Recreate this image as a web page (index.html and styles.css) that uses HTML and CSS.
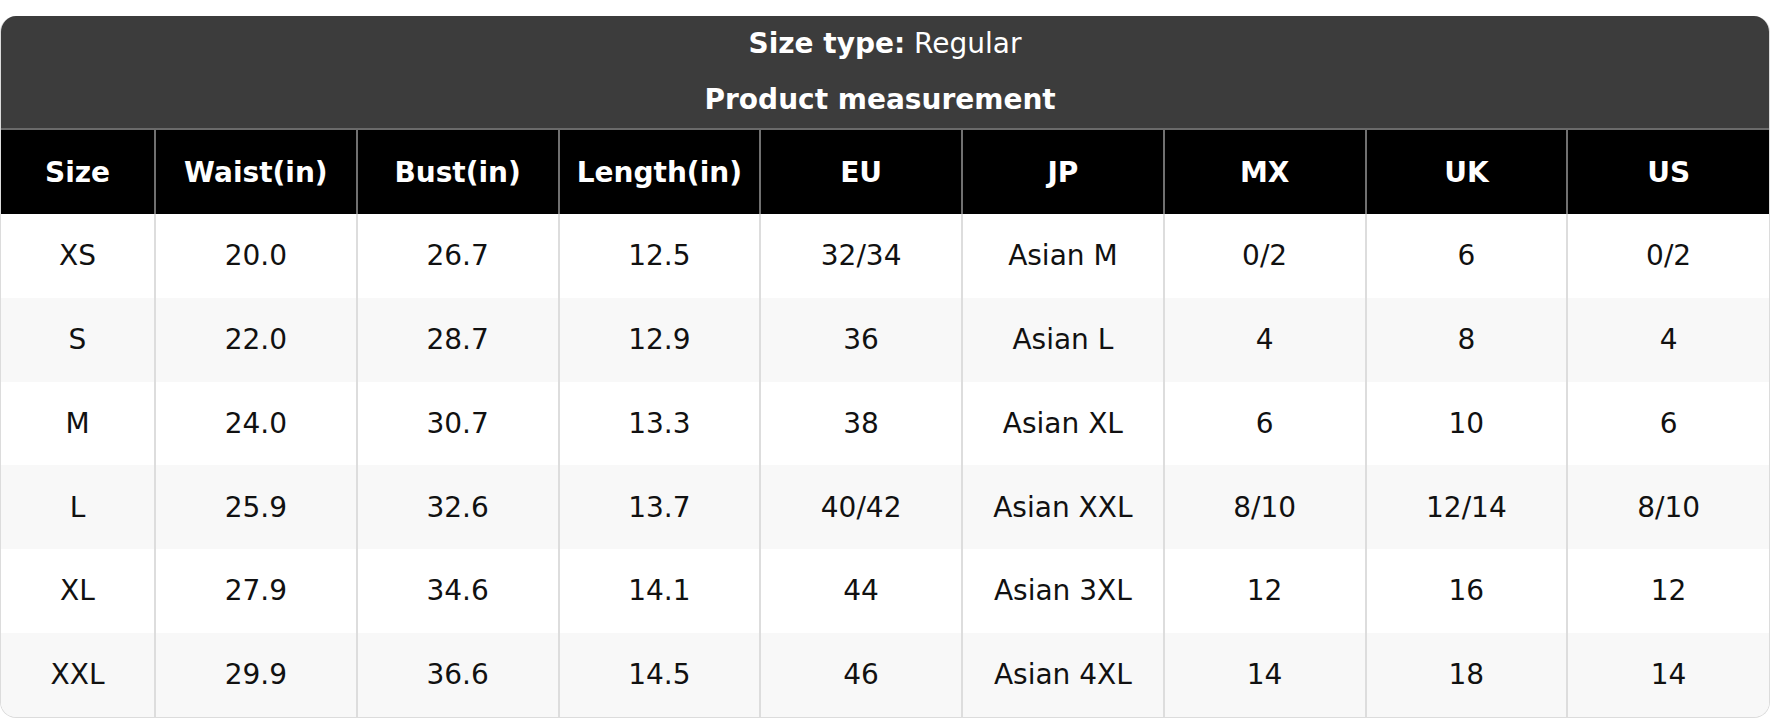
FILE: index.html
```html
<!DOCTYPE html>
<html>
<head>
<meta charset="utf-8">
<link rel="stylesheet" href="styles.css">
</head>
<body>
<div class="page">
  <div class="card">
    <div class="title">
      <div class="title-line"><b>Size type:</b> Regular</div>
      <div class="title-line"><b>Product measurement&nbsp;</b></div>
    </div>
    <table class="chart">
      <colgroup>
        <col class="col-size">
        <col><col><col><col><col><col><col><col>
      </colgroup>
      <thead>
        <tr><th>Size</th><th>Waist(in)</th><th>Bust(in)</th><th>Length(in)</th><th>EU</th><th>JP</th><th>MX</th><th>UK</th><th>US</th></tr>
      </thead>
      <tbody>
        <tr><td>XS</td><td>20.0</td><td>26.7</td><td>12.5</td><td>32/34</td><td>Asian M</td><td>0/2</td><td>6</td><td>0/2</td></tr>
        <tr><td>S</td><td>22.0</td><td>28.7</td><td>12.9</td><td>36</td><td>Asian L</td><td>4</td><td>8</td><td>4</td></tr>
        <tr><td>M</td><td>24.0</td><td>30.7</td><td>13.3</td><td>38</td><td>Asian XL</td><td>6</td><td>10</td><td>6</td></tr>
        <tr><td>L</td><td>25.9</td><td>32.6</td><td>13.7</td><td>40/42</td><td>Asian XXL</td><td>8/10</td><td>12/14</td><td>8/10</td></tr>
        <tr><td>XL</td><td>27.9</td><td>34.6</td><td>14.1</td><td>44</td><td>Asian 3XL</td><td>12</td><td>16</td><td>12</td></tr>
        <tr><td>XXL</td><td>29.9</td><td>36.6</td><td>14.5</td><td>46</td><td>Asian 4XL</td><td>14</td><td>18</td><td>14</td></tr>
      </tbody>
    </table>
  </div>
</div>
</body>
</html>
```

FILE: styles.css
```css
html, body {
  margin: 0;
  padding: 0;
  background: #ffffff;
}
body {
  font-family: "DejaVu Sans", Verdana, sans-serif;
  font-size: 28px;
  color: #111111;
}
.page {
  padding-top: 16px;
}
.card {
  width: 1770px;
  box-sizing: border-box;
  border: 1px solid #dcdcdc;
  border-top: none;
  border-radius: 16px;
  overflow: hidden;
  background: #ffffff;
}
.title {
  background: #3c3c3c;
  color: #ffffff;
  text-align: center;
  border-bottom: 2px solid #6a6a6a;
}
.title-line {
  padding: 12px 0;
  line-height: 32px;
}
.title-line b {
  font-weight: bold;
}
.chart {
  width: 100%;
  border-collapse: collapse;
  table-layout: fixed;
}
.col-size {
  width: 154px;
}
.chart th {
  background: #000000;
  color: #ffffff;
  font-weight: bold;
  height: 84px;
  padding: 0;
  text-align: center;
  border-left: 2px solid #707070;
}
.chart th:first-child,
.chart td:first-child {
  border-left: none;
}
.chart td {
  height: 83.75px;
  padding: 0;
  text-align: center;
  border-left: 2px solid #dddddd;
  color: #111111;
}
.chart tbody tr:nth-child(even) td {
  background: #f8f8f8;
}
```
